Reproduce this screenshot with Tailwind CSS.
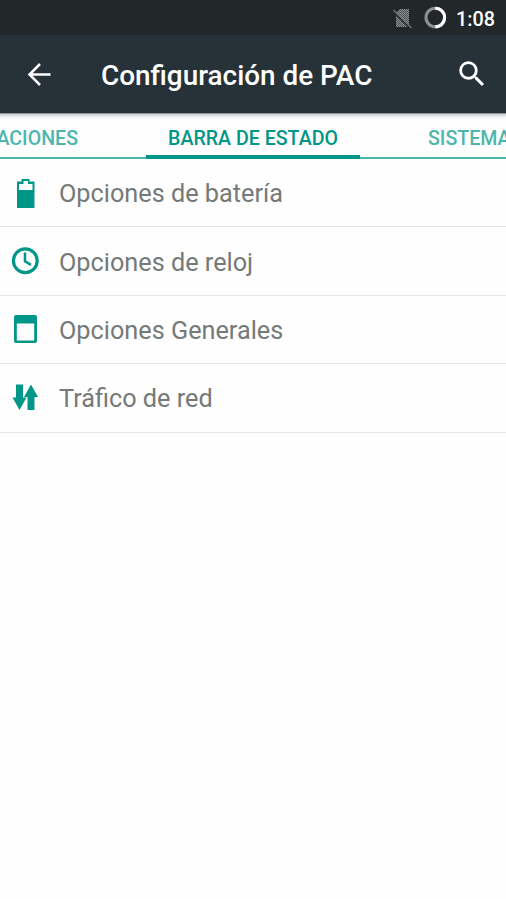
<!DOCTYPE html>
<html lang="es">
<head>
<meta charset="utf-8">
<title>Configuración de PAC</title>
<script src="https://cdn.jsdelivr.net/npm/@tailwindcss/browser@4"></script>
</head>
<body class="bg-white">
<main class="flex h-[899px] w-[506px] flex-col overflow-hidden bg-[#fefefe] font-[Roboto,sans-serif]">
  <div class="flex h-[35px] shrink-0 items-center justify-end bg-[#22272a] pr-[11px] text-white">
    <svg class="mr-[9px] h-[22px] w-[22px]" viewBox="0 0 22 22">
      <defs><pattern id="dots" width="2" height="2" patternUnits="userSpaceOnUse"><path d="M0 0h2v2H0z" fill="#4d5153"/><path d="M0 0h1v1H0zM1 1h1v1H1z" fill="#8b8e90"/></pattern></defs>
      <path d="M8 2h9v18H4V6z" fill="url(#dots)"/>
      <path d="M1 3.500 18.500 21" stroke="#22272a" stroke-width="2.500"/>
      <path d="M1.500 3 19.500 21" stroke="#777b7d" stroke-width="1.300"/>
    </svg>
    <svg class="mr-[9px] h-[24px] w-[24px]" viewBox="0 0 24 24" fill="none" stroke-width="3">
      <circle cx="12.300" cy="11.500" r="9.300" stroke="#8e9193"/>
      <path d="M12.300 2.200a9.300 9.300 0 0 1 0 18.600" stroke="#fff"/>
    </svg>
    <span class="pt-[4px] text-[19.800px] leading-6 font-medium">1:08</span>
  </div>
  <header class="relative z-10 flex h-[78px] shrink-0 items-center bg-[#263238] text-white shadow-[0_1px_0_#8d9293,0_3px_1px_#d8dbdb,0_5px_3px_#eeeeee]">
    <svg class="ml-[25px] h-7 w-7" viewBox="0 0 28 28" fill="none" stroke="#fff" stroke-width="2.500"><path d="M25.500 14.500H5M15 4 4.500 14.500 15 25"/></svg>
    <h1 class="ml-[48px] pt-[4px] text-[27.900px] leading-9 font-medium whitespace-nowrap">Configuración de PAC</h1>
    <svg class="absolute top-[22px] right-[17px] h-[34px] w-[34px]" viewBox="0 0 24 24" fill="#fff"><path d="M15.500 14h-.79l-.28-.27A6.470 6.470 0 0 0 16 9.500 6.500 6.500 0 1 0 9.500 16c1.610 0 3.090-.59 4.230-1.570l.27.28v.79l5 4.990L20.490 19l-4.990-5zm-6 0C7.010 14 5 11.990 5 9.500S7.010 5 9.500 5 14 7.010 14 9.500 11.990 14 9.500 14z"/></svg>
  </header>
  <nav class="grid h-[46px] shrink-0 grid-cols-[146px_214px_146px] border-b-2 border-[#4db6ac] text-[19.600px] leading-6 font-medium whitespace-nowrap text-[#4db6ac]">
    <span class="flex justify-end pt-[14px] pr-[68px]">ACIONES</span>
    <span class="-mb-[2px] flex justify-center border-b-4 border-[#009688] pt-[14px] text-[#009688]">BARRA DE ESTADO</span>
    <span class="pt-[14px] pl-[68px]">SISTEMA</span>
  </nav>
  <ul class="text-[25.250px] leading-8 text-[#757a78]">
    <li class="flex h-[68.400px] items-center border-b border-[#e4e4e4] pt-[2px]">
      <svg class="mr-[19px] ml-[10px] h-[30px] w-[30px]" viewBox="0 1 30 30"><path fill="#009688" fill-rule="evenodd" d="M11.500 0.500h8v3H24.500v26.500H7V3.500h4.500zM13.500 3v3H9v6h13.500v-6h-4.500v-3z"/></svg>
      <span>Opciones de batería</span>
    </li>
    <li class="flex h-[68.400px] items-center border-b border-[#e4e4e4] pt-[2px]">
      <svg class="mr-[19px] ml-[10px] h-[30px] w-[30px]" viewBox="0 0 30 30" fill="none" stroke="#009688"><circle cx="15.300" cy="13.800" r="11.900" stroke-width="3.200"/><path d="M15 5.600v8.700l6 3.500" stroke-width="2.500"/></svg>
      <span class="pt-px">Opciones de reloj</span>
    </li>
    <li class="flex h-[68.400px] items-center border-b border-[#e4e4e4] pt-[2px]">
      <svg class="mr-[19px] ml-[10px] h-[30px] w-[30px]" viewBox="0 0 30 30"><path fill="#009688" fill-rule="evenodd" d="M6 0h19a2 2 0 0 1 2 2v24a2 2 0 0 1-2 2H6a2 2 0 0 1-2-2V2a2 2 0 0 1 2-2zM6.800 8.500v17h17.400v-17z"/></svg>
      <span class="pt-[2px]">Opciones Generales</span>
    </li>
    <li class="flex h-[68.400px] items-center border-b border-[#e4e4e4] pt-[2px]">
      <svg class="mr-[19px] ml-[10px] h-[30px] w-[30px]" viewBox="0 1 30 30" fill="#009688"><path d="M6 1.500h7v13h3.500L9.500 27 2.500 14.500H6zM21 1.500l7 12.500h-3.500v13h-7v-13H14z"/></svg>
      <span>Tráfico de red</span>
    </li>
  </ul>
</main>
</body>
</html>
